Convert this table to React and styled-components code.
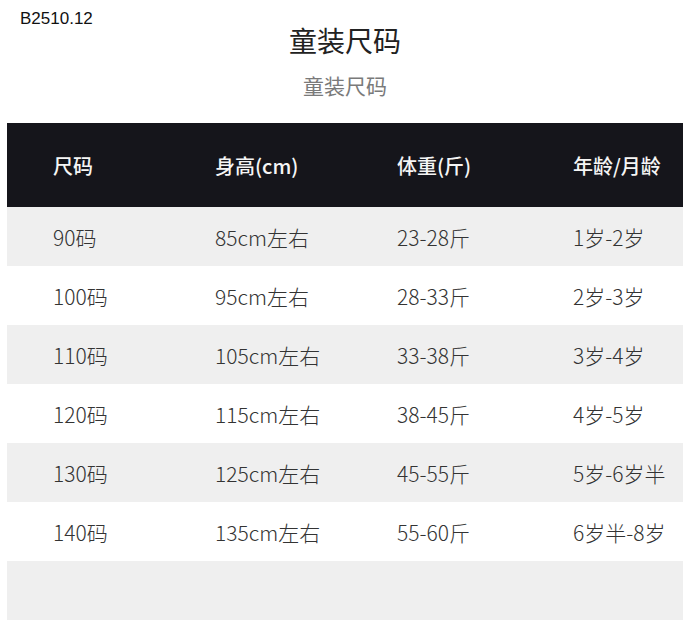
import React from 'react'
import styled, { createGlobalStyle } from 'styled-components'

const GlobalStyle = createGlobalStyle`
  body {
    margin: 0;
    background: #fff;
    font-family: "Noto Sans CJK SC", "Noto Sans", sans-serif;
  }
`;

const Page = styled.div`
  position: relative;
  width: 690px;
  height: 633px;
  background: #fff;
  overflow: hidden;
`;

const Stamp = styled.span`
  position: absolute;
  left: 20px;
  top: 9px;
  font-family: "Liberation Sans", Arial, sans-serif;
  font-size: 17px;
  color: #111;
`;

const Heading = styled.div`
  display: flex;
  flex-direction: column;
  align-items: center;
  padding-top: 21px;
  height: 123px;
  box-sizing: border-box;
`;

const Title = styled.h1`
  margin: 0;
  font-size: 28px;
  line-height: 38px;
  font-weight: 400;
  color: #222;
`;

const Subtitle = styled.h2`
  margin: 12px 0 0;
  font-size: 21px;
  line-height: 28px;
  font-weight: 400;
  color: #7a7a7a;
`;

const Table = styled.div`
  margin: 0 7px;
  display: flex;
  flex-direction: column;
`;

const Row = styled.div`
  display: grid;
  grid-template-columns: 162px 182px 176px 1fr;
  align-items: center;
  padding-left: 46px;
  height: ${p => (p.$head ? 84 : 59)}px;
  background: ${p => (p.$head ? '#15151b' : p.$shade ? '#efefef' : '#fff')};
  color: ${p => (p.$head ? '#f5f5f5' : '#333')};
  font-size: ${p => (p.$head ? 20 : 21)}px;
  font-weight: ${p => (p.$head ? 500 : 300)};
`;

const Cell = styled.span`
  white-space: nowrap;
`;

const head = ['尺码', '身高(cm)', '体重(斤)', '年龄/月龄'];

const rows = [
  ['90码', '85cm左右', '23-28斤', '1岁-2岁'],
  ['100码', '95cm左右', '28-33斤', '2岁-3岁'],
  ['110码', '105cm左右', '33-38斤', '3岁-4岁'],
  ['120码', '115cm左右', '38-45斤', '4岁-5岁'],
  ['130码', '125cm左右', '45-55斤', '5岁-6岁半'],
  ['140码', '135cm左右', '55-60斤', '6岁半-8岁'],
  ['', '', '', ''],
];

export default function App() {
  return (
    <>
      <GlobalStyle />
      <Page>
        <Stamp>B2510.12</Stamp>
        <Heading>
          <Title>童装尺码</Title>
          <Subtitle>童装尺码</Subtitle>
        </Heading>
        <Table>
          <Row $head>
            {head.map(h => <Cell key={h}>{h}</Cell>)}
          </Row>
          {rows.map((r, i) => (
            <Row key={i} $shade={i % 2 === 0}>
              {r.map((c, j) => <Cell key={j}>{c}</Cell>)}
            </Row>
          ))}
        </Table>
      </Page>
    </>
  )
}
